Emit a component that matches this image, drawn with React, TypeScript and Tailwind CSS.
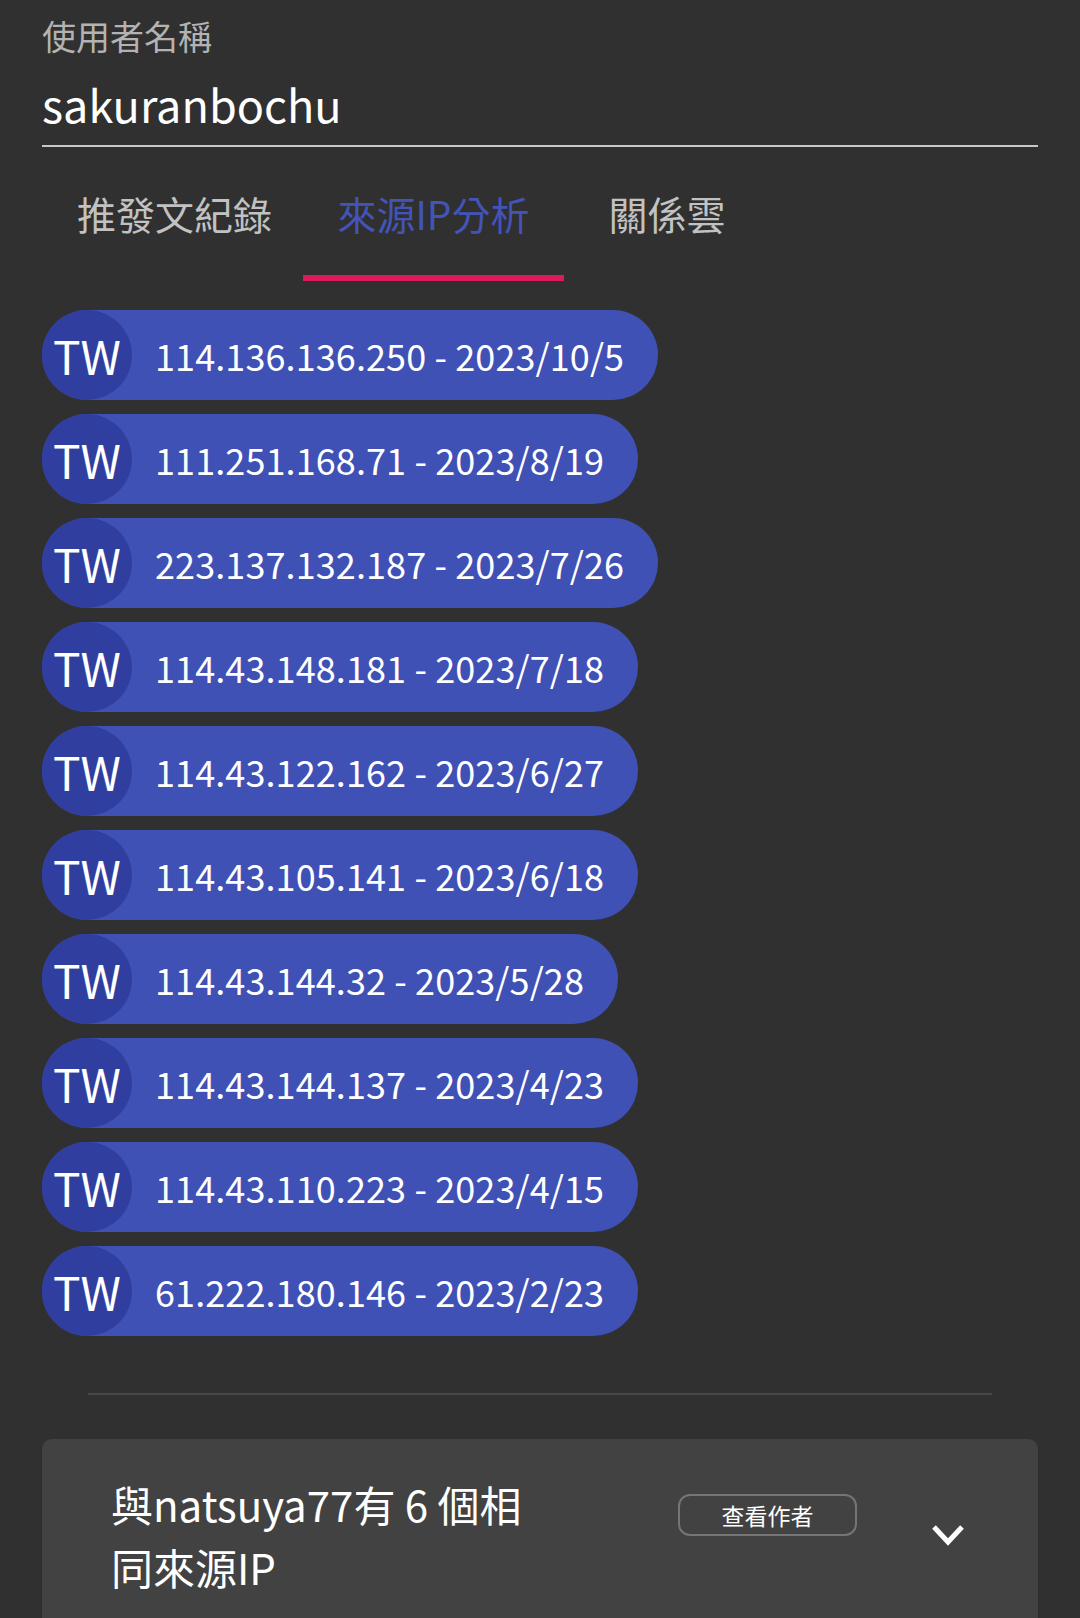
import React from 'react';

const ips = [
  { ip: '114.136.136.250', date: '2023/10/5' },
  { ip: '111.251.168.71', date: '2023/8/19' },
  { ip: '223.137.132.187', date: '2023/7/26' },
  { ip: '114.43.148.181', date: '2023/7/18' },
  { ip: '114.43.122.162', date: '2023/6/27' },
  { ip: '114.43.105.141', date: '2023/6/18' },
  { ip: '114.43.144.32', date: '2023/5/28' },
  { ip: '114.43.144.137', date: '2023/4/23' },
  { ip: '114.43.110.223', date: '2023/4/15' },
  { ip: '61.222.180.146', date: '2023/2/23' },
];

const tabs = [
  { label: '推發文紀錄', width: 'w-[257px]', active: false },
  { label: '來源IP分析', width: 'w-[261px]', active: true },
  { label: '關係雲', width: 'w-[206px]', active: false },
];

const App = () => {
  return (
    <div
      className="w-[1080px] h-[1618px] overflow-hidden bg-[#303030]"
      style={{ fontFamily: '"Noto Sans CJK TC", "Noto Sans", sans-serif' }}
    >
      <div className="px-[42px] pt-[16px]">
        <div className="text-[34px] leading-[40px] text-[#b3b3b3]">使用者名稱</div>
        <div className="mt-[20px] pb-[13px] border-b-2 border-[#c8c8c8]">
          <div className="text-[45px] leading-[56px] text-white">sakuranbochu</div>
        </div>
      </div>

      <div className="flex pl-[46px]">
        {tabs.map((t) => (
          <div key={t.label} className={`${t.width} h-[134px] flex flex-col`}>
            <div
              className={`flex-1 pt-[4px] flex items-center justify-center text-[39px] ${
                t.active ? 'text-[#4354b8]' : 'text-[#c2c2c2]'
              }`}
            >
              {t.label}
            </div>
            <div className={`h-[6px] ${t.active ? 'bg-[#dc1a5c]' : 'bg-transparent'}`} />
          </div>
        ))}
      </div>

      <div className="mt-[29px] px-[42px] flex flex-col items-start gap-[14px]">
        {ips.map((row) => (
          <div key={row.ip} className="h-[90px] flex items-center rounded-full bg-[#3f51b5]">
            <div className="w-[90px] h-[90px] rounded-full bg-[#303f9f] flex items-center justify-center text-[46px] leading-[90px] text-white">
              TW
            </div>
            <div className="ml-[23px] mr-[34px] text-[36px] tracking-[0.1px] leading-[90px] text-white whitespace-nowrap">
              {row.ip} - {row.date}
            </div>
          </div>
        ))}
      </div>

      <div className="mt-[57px] mx-[88px] h-[2px] bg-[#474747]" />

      <div className="mt-[44px] mx-[42px] h-[220px] rounded-[10px] bg-[#424242]">
        <div className="flex items-start pt-[33px] pl-[69px]">
          <div className="w-[430px] text-[42px] leading-[63px] text-white">與natsuya77有 6 個相同來源IP</div>
          <button className="ml-[137px] mt-[22px] w-[179px] h-[42px] rounded-[12px] border-2 border-[#757575] flex items-center justify-center text-[23px] text-white">
            查看作者
          </button>
          <svg className="ml-[74px] mt-[52px]" width="34" height="22" viewBox="0 0 34 22">
            <polyline points="3,3 17,18 31,3" fill="none" stroke="white" strokeWidth="5" />
          </svg>
        </div>
      </div>
    </div>
  );
};

export default App;
